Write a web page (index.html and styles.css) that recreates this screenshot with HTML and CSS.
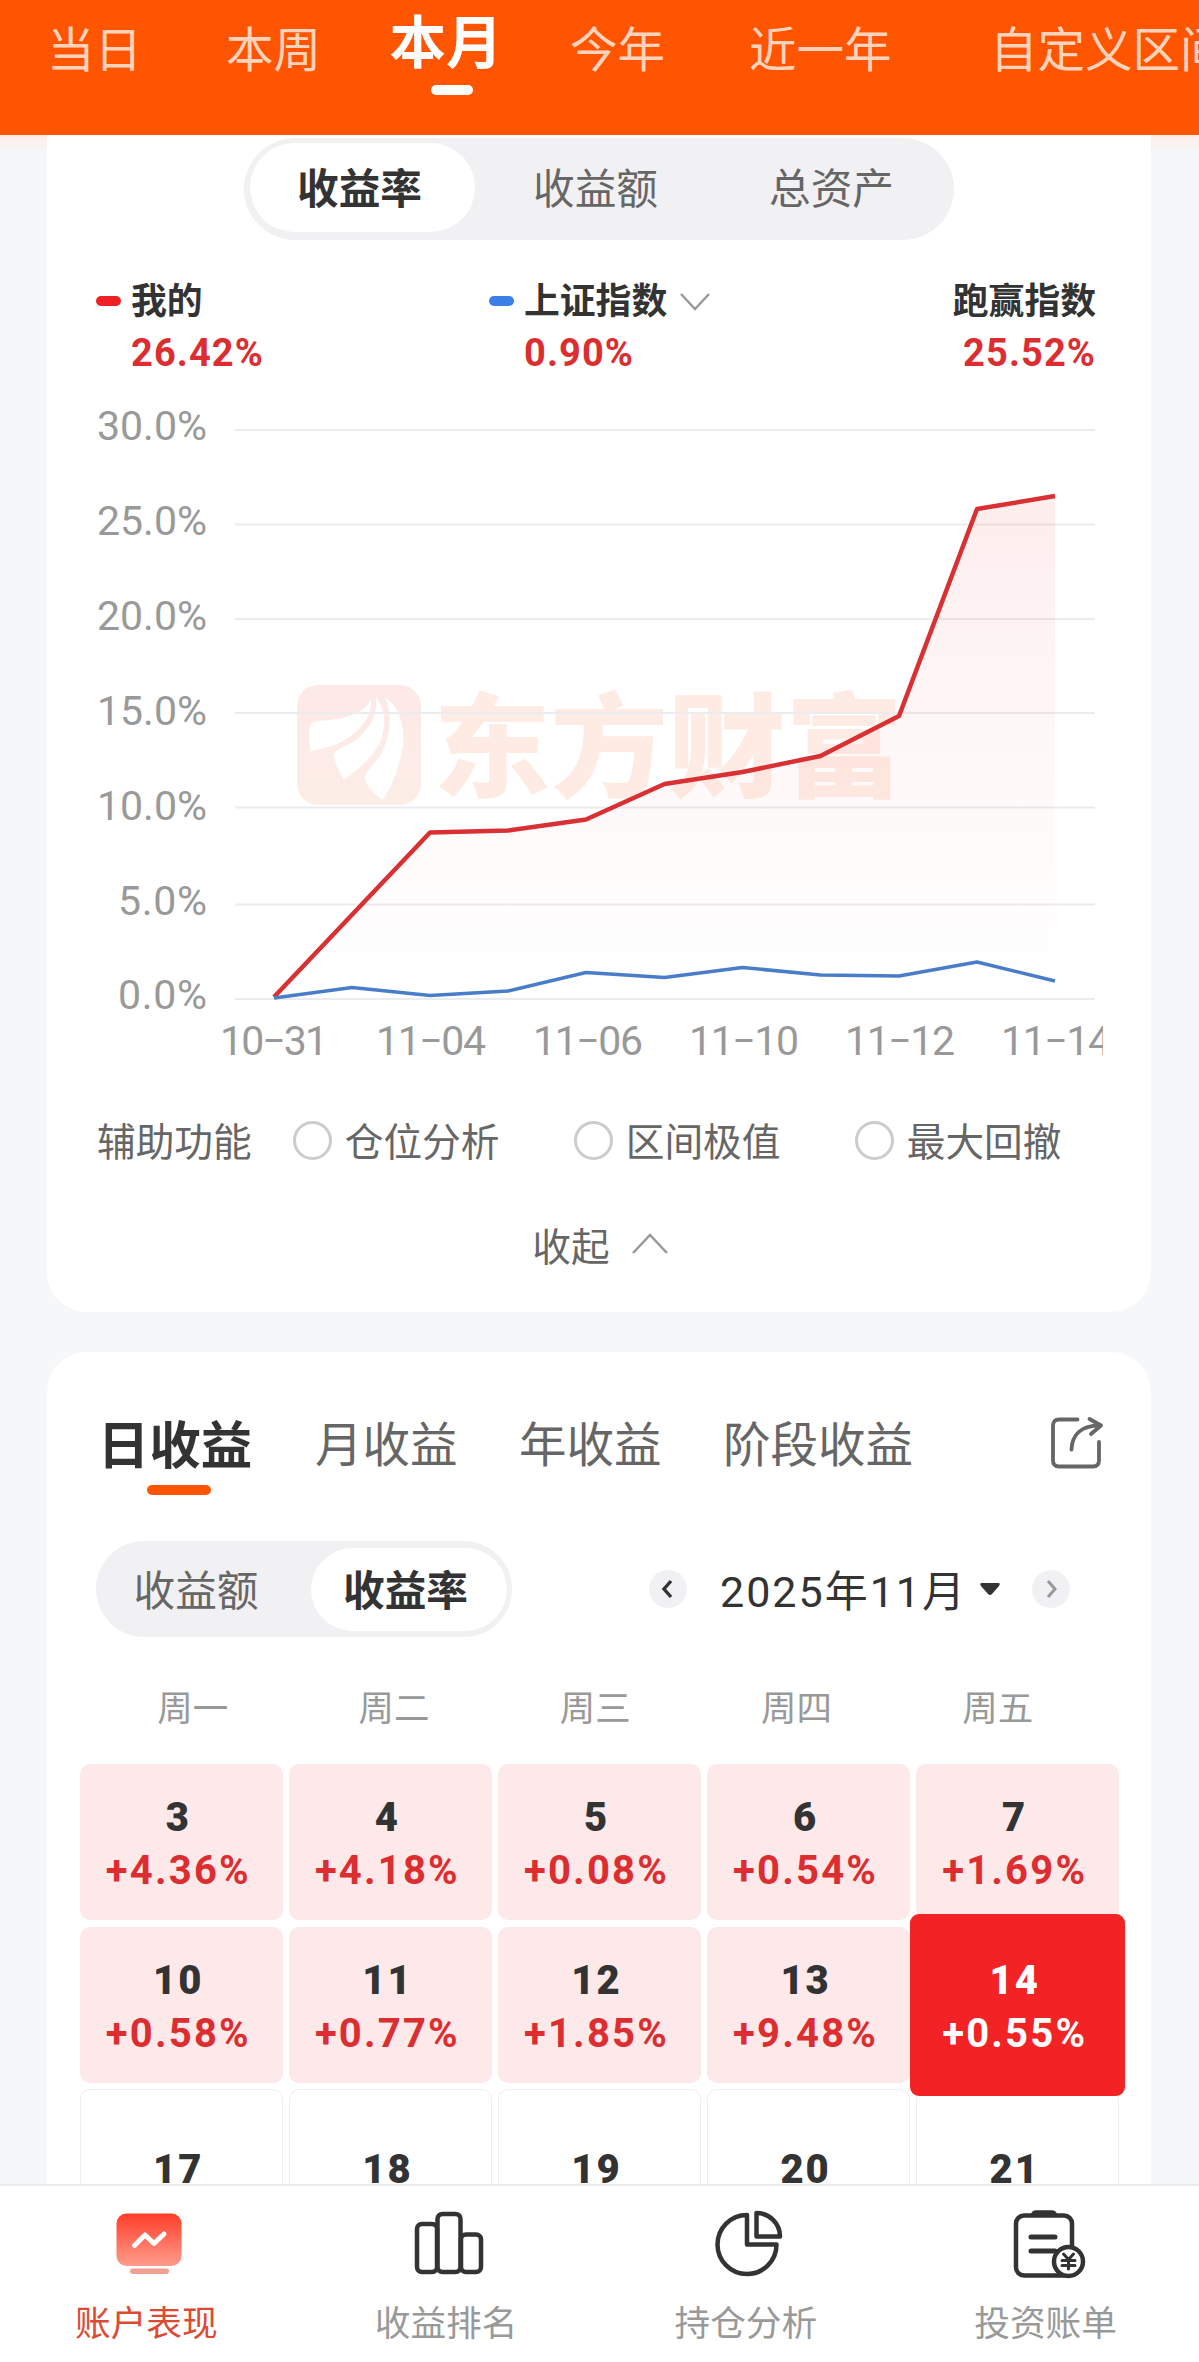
FILE: index.html
```html
<!DOCTYPE html>
<html lang="zh-CN">
<head>
  <meta charset="UTF-8">
  <meta name="viewport" content="width=device-width, initial-scale=1.0">
  <title>账户表现</title>
  <link rel="stylesheet" href="styles.css">
</head>
<body>
  <div class="range-tabs">
    <a class="range-tab">当日</a>
    <a class="range-tab">本周</a>
    <a class="range-tab active">本月</a>
    <a class="range-tab">今年</a>
    <a class="range-tab wide">近一年</a>
    <a class="range-tab last">自定义区间</a>
  </div>

  <div class="content">
    <div class="card chart-card">
      <div class="segment">
        <span class="segment-item active">收益率</span>
        <span class="segment-item">收益额</span>
        <span class="segment-item">总资产</span>
      </div>

      <div class="legend">
        <div class="legend-item mine">
          <div class="legend-name"><i class="dash red"></i>我的</div>
          <div class="legend-value">26.42%</div>
        </div>
        <div class="legend-item index">
          <div class="legend-name"><i class="dash blue"></i>上证指数
            <svg class="chevron-down" width="32" height="20" viewBox="0 0 32 20"><path d="M2 2l14 15L30 2" fill="none" stroke="#999" stroke-width="2.5"/></svg>
          </div>
          <div class="legend-value">0.90%</div>
        </div>
        <div class="legend-item beat">
          <div class="legend-name">跑赢指数</div>
          <div class="legend-value">25.52%</div>
        </div>
      </div>

      <svg class="chart" width="1009" height="680" viewBox="94 400 1009 680">
        <defs>
          <linearGradient id="area" x1="0" y1="0" x2="0" y2="1">
            <stop offset="0" stop-color="#f03030" stop-opacity="0.085"/>
            <stop offset="0.5" stop-color="#f03030" stop-opacity="0.035"/>
            <stop offset="1" stop-color="#f03030" stop-opacity="0"/>
          </linearGradient>
          <linearGradient id="mark" x1="0" y1="0" x2="0" y2="1">
            <stop offset="0" stop-color="#fde9e8"/>
            <stop offset="1" stop-color="#fcede6"/>
          </linearGradient>
        </defs>

        <!-- watermark -->
        <rect x="297" y="685" width="124" height="120" rx="21" fill="url(#mark)"/>
        <g fill="#fff">
          <path d="M371 698C366 712 350 718 329 720C316 721 311 722 310 726C308 735 309 743 311 751C331 747 347 742 359 729C368 719 372 711 371 698Z"/>
          <path d="M376 697C378 715 370 730 353 742C342 749 334 748 334 757C335 764 340 773 344 780C360 767 374 757 380 742C387 725 385 709 376 697Z"/>
          <path d="M385 697C392 714 391 730 384 748C378 762 366 770 365 777C365 785 374 794 382 800C392 789 400 765 403 745C405 724 398 705 385 697Z"/>
        </g>
        <text class="watermark" x="433" y="788" textLength="470" lengthAdjust="spacingAndGlyphs">东方财富</text>

        <g class="grid-lines">
          <path d="M235 430H1095M235 524.5H1095M235 619H1095M235 713H1095M235 807.5H1095M235 904.5H1095M235 999H1095"/>
        </g>
        <path fill="url(#area)" d="M275 998L430.5 832.5L508.5 830.5L586.5 819.5L664.5 784L742.5 772L820.5 756L899 716L977 509L1055 496V998Z"/>
        <path class="line-mine" d="M274 997L430 832.5L508 830.5L586 819.5L664.5 784L742.5 772L820.5 756L899 716L977 509L1055 496"/>
        <path class="line-index" d="M274 998L352 987.5L430 995.5L508 991L586 972.5L664.5 977.5L742.5 967.5L820.5 975L899 976L977 962L1055 981"/>

        <g class="axis-text" text-anchor="end">
          <text x="207" y="440">30.0%</text>
          <text x="207" y="535">25.0%</text>
          <text x="207" y="630">20.0%</text>
          <text x="207" y="725">15.0%</text>
          <text x="207" y="820">10.0%</text>
          <text x="207" y="915" textLength="89">5.0%</text>
          <text x="207" y="1009" textLength="89">0.0%</text>
        </g>
        <g class="axis-text">
          <text x="220" y="1055" textLength="108">10−31</text>
          <text x="376" y="1055" textLength="110">11−04</text>
          <text x="533" y="1055" textLength="110">11−06</text>
          <text x="689" y="1055" textLength="110">11−10</text>
          <text x="845" y="1055" textLength="110">11−12</text>
          <text x="1001" y="1055" textLength="110">11−14</text>
        </g>
      </svg>

      <div class="options">
        <span class="options-title">辅助功能</span>
        <label class="option"><i class="radio"></i><span>仓位分析</span></label>
        <label class="option"><i class="radio"></i><span>区间极值</span></label>
        <label class="option"><i class="radio"></i><span>最大回撤</span></label>
      </div>

      <div class="collapse">收起
        <svg width="38" height="24" viewBox="0 0 38 24"><path d="M2 21L19 3l17 18" fill="none" stroke="#999" stroke-width="2.5"/></svg>
      </div>
    </div>

    <div class="card calendar-card">
      <div class="profit-tabs">
        <span class="profit-tab active">日收益</span>
        <span class="profit-tab">月收益</span>
        <span class="profit-tab">年收益</span>
        <span class="profit-tab">阶段收益</span>
        <svg class="share" width="56" height="56" viewBox="0 0 56 56" fill="none" stroke="#666" stroke-width="3.8" stroke-linecap="round" stroke-linejoin="round">
          <path d="M28.5 4.500H10Q4 4.500 4 10.500V45.500Q4 51.500 10 51.500H44Q50 51.500 50 45.500V27"/>
          <path d="M22.500 34.500C23 20 32 10 52 10.500M40.500 4L52 10.500L42 19"/>
        </svg>
      </div>

      <div class="toolbar">
        <div class="segment small">
          <span class="segment-item">收益额</span>
          <span class="segment-item active">收益率</span>
        </div>
        <div class="month-picker">
          <span class="arrow"><svg width="38" height="38" viewBox="0 0 38 38"><path d="M22 11l-7 8 7 8" fill="none" stroke="#333" stroke-width="3.4"/></svg></span>
          <span class="month">2025年11月</span>
          <svg class="caret" width="20" height="12" viewBox="0 0 20 12"><path d="M2 0H18Q21 0 19 3L12 11Q10 13 8 11L1 3Q-1 0 2 0Z" fill="#333"/></svg>
          <span class="arrow"><svg width="38" height="38" viewBox="0 0 38 38"><path d="M16 11l7 8-7 8" fill="none" stroke="#999" stroke-width="3"/></svg></span>
        </div>
      </div>

      <div class="weekdays">
        <span>周一</span><span>周二</span><span>周三</span><span>周四</span><span>周五</span>
      </div>

      <div class="days">
        <div class="day up"><b>3</b><em>+4.36%</em></div>
        <div class="day up"><b>4</b><em>+4.18%</em></div>
        <div class="day up"><b>5</b><em>+0.08%</em></div>
        <div class="day up"><b>6</b><em>+0.54%</em></div>
        <div class="day up"><b>7</b><em>+1.69%</em></div>
        <div class="day up"><b>10</b><em>+0.58%</em></div>
        <div class="day up"><b>11</b><em>+0.77%</em></div>
        <div class="day up"><b>12</b><em>+1.85%</em></div>
        <div class="day up"><b>13</b><em>+9.48%</em></div>
        <div class="day selected"><b>14</b><em>+0.55%</em></div>
        <div class="day empty"><b>17</b></div>
        <div class="day empty"><b>18</b></div>
        <div class="day empty"><b>19</b></div>
        <div class="day empty"><b>20</b></div>
        <div class="day empty"><b>21</b></div>
      </div>
    </div>
  </div>

  <div class="bottom-nav">
    <a class="nav-item active">
      <svg width="80" height="76" viewBox="0 0 80 76">
        <defs>
          <linearGradient id="navred" x1="0" y1="0" x2="0" y2="1">
            <stop offset="0" stop-color="#ff3d28"/>
            <stop offset="1" stop-color="#ff9c8c"/>
          </linearGradient>
        </defs>
        <rect x="6.500" y="7.500" width="65" height="52.500" rx="10" fill="url(#navred)"/>
        <path d="M24.500 39.500L35 29L44 37.500L54 28" fill="none" stroke="#fff" stroke-width="5" stroke-linecap="round" stroke-linejoin="round"/>
        <rect x="20" y="62.500" width="39" height="5.500" rx="2.700" fill="#f1a092"/>
      </svg>
      <span>账户表现</span>
    </a>
    <a class="nav-item">
      <svg width="80" height="76" viewBox="0 0 80 76" fill="none" stroke="#333" stroke-width="4.5">
        <rect x="7" y="18" width="20" height="48" rx="5"/>
        <rect x="27.500" y="8" width="23" height="58" rx="5"/>
        <rect x="51" y="28.500" width="20" height="37.500" rx="5"/>
      </svg>
      <span>收益排名</span>
    </a>
    <a class="nav-item">
      <svg width="80" height="76" viewBox="0 0 80 76" fill="none" stroke="#333" stroke-width="4.5" stroke-linejoin="round">
        <path d="M38 9A29.500 29.500 0 1 0 67.500 38.500H38Z"/>
        <path d="M47.500 7A23.500 23.500 0 0 1 71 30.500H47.500Z"/>
      </svg>
      <span>持仓分析</span>
    </a>
    <a class="nav-item">
      <svg width="80" height="76" viewBox="0 0 80 76" fill="none" stroke="#333" stroke-width="4.5" stroke-linecap="round" stroke-linejoin="round">
        <rect x="7" y="9.500" width="56" height="60" rx="8"/>
        <path d="M23 7.500Q24 5 27 5H43Q46 5 47 7.500V10H23Z" fill="#333" stroke-width="1.500"/>
        <path d="M22 31H46M22 45H46" stroke-width="5"/>
        <circle cx="59.500" cy="55.500" r="14.500" fill="#fff"/>
        <path d="M54.500 48L59.500 53.500L64.500 48M53 54.500H66M53 59.500H66M59.500 53.500V63" stroke-width="3"/>
      </svg>
      <span>投资账单</span>
    </a>
  </div>
</body>
</html>
```

FILE: styles.css
```css
* { box-sizing: border-box; }
body { font-family: Roboto, "Noto Sans CJK SC", sans-serif; margin: 0; height: 2362px; background: #f6f7f9; color: #333; display: flex; flex-direction: column; overflow: hidden; }
i, em { font-style: normal; }

/* top range tabs */
.range-tabs { flex: none; height: 135px; background: #ff5400; display: flex; padding-left: 47px; overflow: hidden; white-space: nowrap; }
.range-tab { flex: none; width: 95px; margin-right: 84px; height: 103px; line-height: 103px; font-size: 47.500px; color: #ffd3bb; }
.range-tab.active { width: 114px; margin-left: -16px; margin-right: 67px; height: 98px; line-height: 88px; font-size: 56.500px; font-weight: 700; color: #fff; display: flex; flex-direction: column; align-items: center; }
.range-tab.active::after { content: ""; width: 42px; height: 10px; margin-top: -3px; margin-left: 11px; border-radius: 5px; background: #fff; }
.range-tab.wide { width: 143px; margin-right: 98px; }
.range-tab.last { width: 240px; margin-right: 0; }

.content { flex: 1; min-height: 0; overflow: hidden; padding: 0 48px 0 47px; background: linear-gradient(#fdeee8, #f6f7f9 18px); }
.card { background: #fff; border-radius: 40px; }
.chart-card { height: 1177px; border-radius: 0 0 40px 40px; padding-top: 3px; margin-bottom: 40px; }

/* pill switch */
.segment { width: 710px; height: 102px; margin-left: 197px; padding: 5px 6px 8px; background: #f1f1f3; border-radius: 51px; display: flex; gap: 11px; font-size: 41.700px; color: #666; }
.segment-item { width: 225px; height: 89px; line-height: 94px; padding-right: 6px; text-align: center; border-radius: 45px; }
.segment-item.active { background: #fff; color: #333; font-weight: 700; }
.segment.small { width: 416px; height: 96px; margin: 0; padding: 7px 5px 6px; gap: 20px; }
.segment.small .segment-item { width: 190px; height: 83px; line-height: 87px; padding-right: 0; }
.segment.small .segment-item.active { width: 196px; padding-right: 7px; }

.legend { display: flex; padding: 28px 55px 0 49px; height: 160px; }
.legend-name { display: flex; align-items: center; height: 60px; font-size: 35.800px; font-weight: 700; }
.legend-value { font-size: 38px; font-weight: 700; line-height: 48px; color: #dc2e30; padding-left: 35px; margin-top: 1px; letter-spacing: 1.100px; }
.legend-item.index { margin-left: 226px; }
.legend-item.mine { width: 167px; }
.legend-item.beat { margin-left: auto; }
.legend-item.beat .legend-name { justify-content: flex-end; }
.legend-item.beat .legend-value { text-align: right; padding-left: 0; }
.dash { width: 25px; height: 10px; border-radius: 5px; margin-right: 10px; margin-top: 5px; }
.dash.red { background: #ee2226; }
.dash.blue { background: #3b7fe8; }
.chevron-down { margin-left: 12px; margin-top: 7px; }

/* chart */
.chart { display: block; margin-left: 47px; }
.grid-lines { stroke: #eaecef; stroke-width: 2; }
.line-mine { fill: none; stroke: #d93033; stroke-width: 4.500; stroke-linejoin: round; }
.line-index { fill: none; stroke: #4a7dc9; stroke-width: 3.500; stroke-linejoin: round; }
.axis-text { font-size: 41px; fill: #999; }
.watermark { font-size: 113px; font-weight: 900; fill: #feece4; }

.options { display: flex; align-items: center; height: 56px; margin-top: 32px; padding-left: 50px; font-size: 38.700px; color: #666; }
.options-title { margin-right: 41px; margin-top: -3px; }
.option { display: flex; align-items: center; width: 281px; }
.option span { margin-top: -3px; }
.radio { width: 39px; height: 39px; border: 3px solid #ccc; border-radius: 50%; margin-right: 13px; }
.collapse { display: flex; align-items: center; justify-content: center; gap: 21px; height: 60px; margin-top: 46px; font-size: 38.700px; color: #666; padding-left: 3px; }

/* calendar */
.calendar-card { height: 900px; padding-top: 60px; }
.profit-tabs { display: flex; padding-left: 50px; height: 90px; }
.profit-tab { font-size: 47.500px; line-height: 69px; color: #666; margin-right: 61.500px; }
.profit-tab.active { font-size: 51.500px; font-weight: 700; color: #333; margin-right: 62px; width: 156px; display: flex; flex-direction: column; align-items: center; }
.profit-tab.active::after { content: ""; width: 64px; height: 10px; margin-top: 4px; margin-left: 8px; border-radius: 5px; background: #ff5400; }
.share { margin-left: auto; margin-right: 46px; margin-top: 3px; }

.toolbar { display: flex; margin-top: 39px; padding-left: 49px; }
.month-picker { display: flex; align-items: center; margin-left: 137px; height: 96px; }
.arrow { width: 38px; height: 38px; border-radius: 50%; background: #f1f1f3; }
.month { width: 248px; margin-left: 33px; margin-top: -3px; font-size: 43px; letter-spacing: 2px; white-space: nowrap; }
.caret { margin-left: 12px; margin-right: 32px; }

.weekdays { display: flex; margin-top: 42px; padding-left: 45px; font-size: 35.500px; line-height: 60px; color: #999; }
.weekdays span { width: 201.300px; text-align: center; }
.days { display: grid; grid-template-columns: repeat(5, 202.600px); grid-auto-rows: 156px; gap: 6.500px; margin: 25px 0 0 33px; }
.day { border-radius: 10px; padding-top: 30px; padding-right: 6px; text-align: center; font-size: 40px; font-weight: 700; line-height: 48px; white-space: nowrap; }
.day b, .day em { display: block; letter-spacing: 2px; }
.day em { margin-top: 5px; color: #dc2e30; }
.day em { letter-spacing: 2.200px; }
.day.up { background: #fde9e9; }
.day.selected { background: #f32224; color: #fff; margin: -13px -6px; padding-top: 43px; border-radius: 9px; z-index: 1; }
.day.selected em { color: #fff; }
.day.empty { border: 1px solid #eee; padding-top: 56px; }

/* bottom navigation */
.bottom-nav { flex: none; height: 178px; border-top: 2px solid #ebecee; background: #fff; display: flex; }
.nav-item { flex: 1; display: flex; flex-direction: column; align-items: center; padding-top: 20px; font-size: 35.700px; line-height: 50px; color: #999; }
.nav-item span { margin-top: 17px; padding-right: 7px; }
.nav-item.active { color: #dd4a34; }
```
